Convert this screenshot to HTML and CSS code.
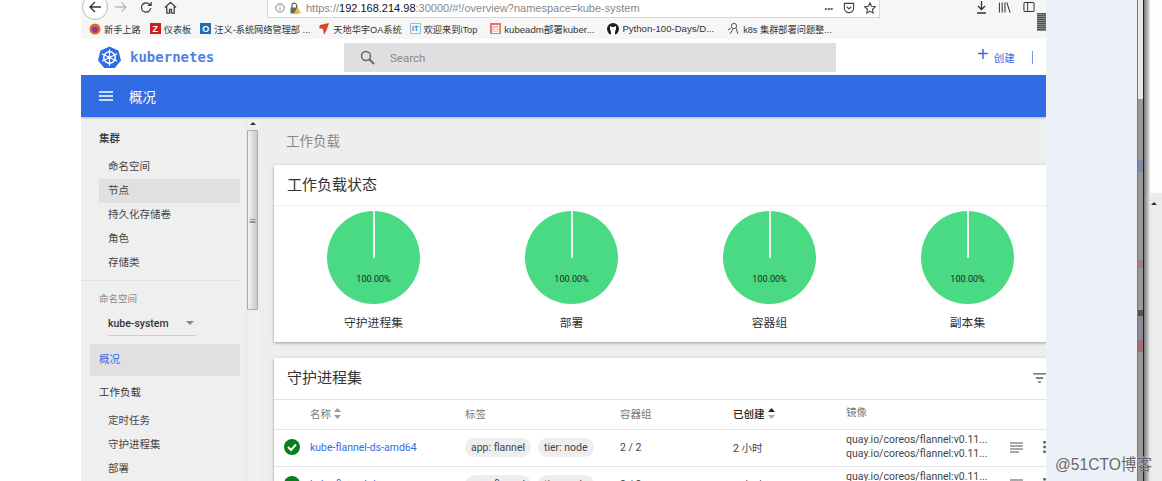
FILE: index.html
```html
<!DOCTYPE html>
<html lang="zh">
<head>
<meta charset="utf-8">
<title>Kubernetes</title>
<link rel="stylesheet" href="styles.css">
</head>
<body>
<div class="screen">
  <div class="gutter"></div>
  <div class="window">
    <div class="toolbar">
      <div class="nav">
        <span class="back"><svg width="16" height="16" viewBox="0 0 16 16"><path d="M14 8H3M8 3 3 8l5 5" fill="none" stroke="#333" stroke-width="1.400"/></svg></span>
        <svg class="fwd" width="14" height="14" viewBox="0 0 14 14"><path d="M1 7h11M7.500 2.500 12 7l-4.500 4.500" fill="none" stroke="#bbb" stroke-width="1.300"/></svg>
        <svg class="reload" width="13" height="13" viewBox="0 0 14 14"><path d="M11.500 7.500A5 5 0 1 1 9.500 3L12 4.500M12 1v3.800H8.500" fill="none" stroke="#444" stroke-width="1.400"/></svg>
        <svg class="home" width="13" height="13" viewBox="0 0 14 14"><path d="M1 7 7 1.500 13 7M3 6v7h3V9h2v4h3V6" fill="none" stroke="#444" stroke-width="1.400"/></svg>
      </div>
      <div class="urlbar">
        <svg class="ubar-ico" width="10" height="10" viewBox="0 0 12 12"><circle cx="6" cy="6" r="5" fill="none" stroke="#666"/><path d="M6 5.500v3M6 3v1.200" stroke="#666"/></svg>
        <svg class="lock ubar-ico" width="12" height="12" viewBox="0 0 12 12"><path d="M3 6V3.500a2.300 2.300 0 0 1 4.600 0V6" fill="none" stroke="#666" stroke-width="1.200"/><rect x="1.500" y="5.500" width="7.500" height="6" fill="#666"/><path d="M8.500 5 12 11.500H5z" fill="#f2b632"/></svg>
        <span class="url"><span class="dim">https://</span>192.168.214.98<span class="dim">:30000/#!/overview?namespace=kube-system</span></span>
        <span class="spacer"></span>
        <span class="dots">•••</span>
        <svg class="ubar-ico" width="12" height="12" viewBox="0 0 13 13"><path d="M1.500 1.500h10v5a5 5 0 0 1-10 0z" fill="none" stroke="#444" stroke-width="1.200"/><path d="M4 5l2.500 2.500L9 5" fill="none" stroke="#444" stroke-width="1.200"/></svg>
        <svg class="star ubar-ico" width="12" height="12" viewBox="0 0 13 13"><path d="m6.500 1 1.700 3.700 4 .5-3 2.700.8 4-3.500-2-3.500 2 .8-4-3-2.700 4-.5z" fill="none" stroke="#444" stroke-width="1.200"/></svg>
      </div>
      <div class="tools">
        <svg width="11" height="13" viewBox="0 0 11 13"><path d="M5.500 0v8M2 5l3.500 3.500L9 5M1 12h9" fill="none" stroke="#333" stroke-width="1.300"/></svg>
        <svg class="lib" width="13" height="13" viewBox="0 0 14 13"><path d="M1.500 1v11M4.500 1v11M7.500 1v11M9.500 1l3.500 11" fill="none" stroke="#333" stroke-width="1.100"/></svg>
        <svg class="panel" width="12" height="12" viewBox="0 0 13 13"><rect x="1" y="1.500" width="11" height="10" rx="1.500" fill="none" stroke="#333" stroke-width="1.100"/><path d="M5 1.500v10" stroke="#333"/></svg>
        <span class="grip"></span>
      </div>
    </div>
    <div class="bookmarks">
      <span class="bm"><svg width="12" height="12" viewBox="0 0 12 12"><circle cx="6" cy="6" r="5.500" fill="#e8632a"/><circle cx="6" cy="6.500" r="3" fill="#7a3fa0"/></svg>新手上路</span>
      <span class="bm"><i class="z">Z</i>仪表板</span>
      <span class="bm tight"><i class="o">O</i>汪义-系统网络管理部 ...</span>
      <span class="bm tight"><svg width="12" height="12" viewBox="0 0 12 12"><path d="M2 2 11 0 9 6 6 12 5 6 1 5z" fill="#d9472b"/></svg>天地华宇OA系统</span>
      <span class="bm roomy"><i class="it">iT</i>欢迎来到iTop</span>
      <span class="bm roomy wide"><i class="k">図</i>kubeadm部署kuber...</span>
      <span class="bm roomy wide"><svg width="12" height="12" viewBox="0 0 12 12"><circle cx="6" cy="6" r="6" fill="#1b1f23"/><path d="M4 12V9L3 6V3l2 1h2l2-1v3L8 9v3z" fill="#fff"/></svg>Python-100-Days/D...</span>
      <span class="bm"><svg width="13" height="13" viewBox="0 0 13 13"><circle cx="7" cy="4" r="2.600" fill="none" stroke="#555"/><path d="M1 8l3-2M9 6l2 6M3 12l3-5" fill="none" stroke="#555"/></svg>k8s 集群部署问题整...</span>
    </div>
    <header class="k-head">
      <div class="brand">
        <svg width="23" height="23" viewBox="0 0 24 24"><path d="M12 .5 21.500 5 24 15l-6.500 8h-11L0 15 2.500 5z" fill="#326ce5"/><circle cx="12" cy="12" r="6" fill="none" stroke="#fff" stroke-width="1.600"/><path d="M12 3.500v17M4 8l16 8M20 8 4 16" stroke="#fff" stroke-width="1.200"/><circle cx="12" cy="12" r="1.800" fill="#fff"/></svg>
        <span class="logo-text">kubernetes</span>
      </div>
      <div class="search">
        <svg width="15" height="15" viewBox="0 0 15 15"><circle cx="6" cy="6" r="4.500" fill="none" stroke="#666" stroke-width="1.500"/><path d="m9.500 9.500 4.500 4.500" stroke="#666" stroke-width="1.800"/></svg>
        <span>Search</span>
      </div>
      <div class="create"><span class="plus">+</span><span class="create-label">创建</span><span class="sep"></span></div>
    </header>
    <div class="k-bar">
      <svg width="14" height="10" viewBox="0 0 14 10"><path d="M0 1h14M0 5h14M0 9h14" stroke="#fff" stroke-width="1.500"/></svg>
      <span>概况</span>
    </div>
    <div class="k-main">
      <nav class="side">
        <div class="side-h first">集群</div>
        <div class="side-i">命名空间</div>
        <div class="side-i on">节点</div>
        <div class="side-i">持久化存储卷</div>
        <div class="side-i">角色</div>
        <div class="side-i">存储类</div>
        <div class="rule"></div>
        <div class="ns-label">命名空间</div>
        <div class="ns-select"><span>kube-system</span><i class="caret"></i></div>
        <div class="side-active">概况</div>
        <div class="side-h">工作负载</div>
        <div class="side-i sub-first">定时任务</div>
        <div class="side-i">守护进程集</div>
        <div class="side-i">部署</div>
      </nav>
      <div class="vscroll"><i class="arrow"></i><div class="thumb"><span>≡</span></div></div>
      <main class="content">
        <h1 class="page-title">工作负载</h1>
        <section class="card status">
          <h2 class="card-title">工作负载状态</h2>
          <div class="pies">
            <div class="pie-cell"><div class="pie"><span class="needle"></span><span class="pct">100.00%</span></div><div class="pie-name">守护进程集</div></div>
            <div class="pie-cell"><div class="pie"><span class="needle"></span><span class="pct">100.00%</span></div><div class="pie-name">部署</div></div>
            <div class="pie-cell"><div class="pie"><span class="needle"></span><span class="pct">100.00%</span></div><div class="pie-name">容器组</div></div>
            <div class="pie-cell"><div class="pie"><span class="needle"></span><span class="pct">100.00%</span></div><div class="pie-name">副本集</div></div>
          </div>
        </section>
        <section class="card table-card">
          <div class="table-head">
            <h2 class="card-title">守护进程集</h2>
            <svg width="13" height="10" viewBox="0 0 14 11"><path d="M0 1h14M3 5.500h8M5.500 10h3" stroke="#555" stroke-width="1.400"/></svg>
          </div>
          <div class="row heads">
            <span class="c-ico"></span>
            <span class="c-name">名称 <svg width="7" height="11" viewBox="0 0 7 11"><path d="M3.500 0 7 4H0zM3.500 11 0 7h7z" fill="#999"/></svg></span>
            <span class="c-tags">标签</span>
            <span class="c-pods">容器组</span>
            <span class="c-age strong">已创建 <svg width="7" height="11" viewBox="0 0 7 11"><path d="M3.500 0 7 4H0z" fill="#222"/><path d="M3.500 11 0 7h7z" fill="#aaa"/></svg></span>
            <span class="c-img">镜像</span>
          </div>
          <div class="row body">
            <span class="c-ico"><svg width="16" height="16" viewBox="0 0 16 16"><circle cx="8" cy="8" r="8" fill="#0a7d1e"/><path d="m4 8 3 3 5-5.500" fill="none" stroke="#fff" stroke-width="2"/></svg></span>
            <span class="c-name link">kube-flannel-ds-amd64</span>
            <span class="c-tags"><em class="chip">app: flannel</em><em class="chip">tier: node</em></span>
            <span class="c-pods">2 / 2</span>
            <span class="c-age">2 小时</span>
            <span class="c-img">quay.io/coreos/flannel:v0.11...<br>quay.io/coreos/flannel:v0.11...</span>
            <span class="c-act"><svg width="13" height="11" viewBox="0 0 13 11"><path d="M0 1h13M0 4h13M0 7h13M0 10h9" stroke="#555" stroke-width="1.200"/></svg><svg class="kebab" width="3" height="12" viewBox="0 0 3 12"><path d="M1.500 0v2.500M1.500 4.700v2.500M1.500 9.400v2.500" stroke="#555" stroke-width="2.400"/></svg></span>
          </div>
          <div class="row body">
            <span class="c-ico"><svg width="16" height="16" viewBox="0 0 16 16"><circle cx="8" cy="8" r="8" fill="#0a7d1e"/><path d="m4 8 3 3 5-5.500" fill="none" stroke="#fff" stroke-width="2"/></svg></span>
            <span class="c-name link">kube-flannel-ds</span>
            <span class="c-tags"><em class="chip">app: flannel</em><em class="chip">tier: node</em></span>
            <span class="c-pods">2 / 2</span>
            <span class="c-age">2 小时</span>
            <span class="c-img">quay.io/coreos/flannel:v0.11...<br>quay.io/coreos/flannel:v0.11...</span>
            <span class="c-act"><svg width="13" height="11" viewBox="0 0 13 11"><path d="M0 1h13M0 4h13M0 7h13M0 10h9" stroke="#555" stroke-width="1.200"/></svg><svg class="kebab" width="3" height="12" viewBox="0 0 3 12"><path d="M1.500 0v2.500M1.500 4.700v2.500M1.500 9.400v2.500" stroke="#555" stroke-width="2.400"/></svg></span>
          </div>
        </section>
      </main>
    </div>
  </div>
  <div class="pane"></div>
  <div class="edge"><div class="edge-track"></div><div class="edge-line"></div><div class="edge-shadow"></div></div>
  <div class="far">
    <div class="far-top"></div>
    <div class="far-strip"><i class="arrow"></i></div>
  </div>
  <div class="watermark">@51CTO博客</div>
</div>
</body>
</html>
```
FILE: styles.css
```css
* { box-sizing: border-box; }
html, body { margin: 0; height: 100%; overflow: hidden; }
body { font-family: "Liberation Sans", "Noto Sans CJK SC", sans-serif; background: #fff; color: #333; }
.screen { position: relative; display: flex; width: 1162px; height: 481px; overflow: hidden; }
.gutter { width: 81px; flex: none; background: #fff; }
.window { width: 965px; flex: none; display: flex; flex-direction: column; overflow: hidden; background: #eee; }

.toolbar { height: 18px; flex: none; display: flex; background: #f6f6f6; position: relative; }
.nav { width: 186px; display: flex; align-items: center; padding-left: 1px; margin-top: -4px; }
.back { width: 26px; height: 26px; margin-top: -1px; border: 1px solid #bbb; border-radius: 50%; background: #fff; display: flex; align-items: center; justify-content: center; flex: none; }
.fwd { margin-left: 6px; }
.reload { margin-left: 12px; }
.home { margin-left: 11px; }
.urlbar { width: 613px; height: 18px; background: #fff; border: 1px solid #d8d8d8; border-top: 0; display: flex; align-items: center; gap: 4px; padding: 0 3px 1px 7px; font-size: 11px; }
.lock { margin-right: 1px; }
.url { color: #111; white-space: nowrap; font-size: 11px; }
.dim { color: #888; }
.spacer { flex: 1; }
.dots { font-size: 8px; color: #555; letter-spacing: 0; margin-right: 6px; }
.star { margin-left: 5px; }
.tools { flex: 1; display: flex; align-items: center; padding-left: 96px; padding-bottom: 4px; position: relative; }
.lib { margin-left: 11px; }
.panel { margin-left: 12px; }
.grip { position: absolute; right: 0; top: 13px; width: 9px; height: 18px; background: repeating-linear-gradient(#555 0 1px, #888 1px 2px); z-index: 2; }

.bookmarks { height: 21px; flex: none; display: flex; align-items: center; background: #f6f6f6; font-size: 9.200px; color: #333; padding-left: 8px; white-space: nowrap; }
.bm { display: inline-flex; align-items: center; gap: 3px; margin-right: 9px; }
.bm.tight { margin-right: 8px; }
.bm.roomy { margin-right: 13px; }
.bm.wide { font-size: 9.600px; }
.bm i { font-style: normal; width: 11px; height: 11px; display: inline-flex; align-items: center; justify-content: center; font-size: 9px; font-weight: 700; }
.bm .z { background: #c8201f; color: #fff; }
.bm .o { background: #1e6db7; color: #fff; }
.bm .it { color: #3a8fc8; border: 1px solid #8ec0e0; font-size: 8px; }
.bm .k { background: #e2756a; color: #fff; font-size: 8px; }

.k-head { height: 36px; flex: none; background: #fff; display: flex; align-items: flex-start; }
.brand { width: 263px; height: 36px; display: flex; align-items: center; gap: 9px; padding-left: 17px; }
.logo-text { color: #326ce5; font-family: "DejaVu Sans Mono", monospace; font-size: 14px; font-weight: 700; opacity: .85; }
.search { width: 492px; height: 29px; margin-top: 4px; background: #dfdfdf; display: flex; align-items: center; gap: 15px; padding-left: 16px; color: #888; font-family: Roboto, sans-serif; font-size: 11.500px; }
.create { flex: 1; height: 36px; display: flex; align-items: center; padding-left: 141px; color: #326ce5; }
.plus { font-size: 20px; font-weight: 300; line-height: 20px; margin-top: -6px; }
.create-label { font-size: 10.500px; margin-left: 5px; }
.sep { width: 1px; height: 13px; background: #6f9ae8; margin-left: 17px; }

.k-bar { height: 42px; flex: none; background: #326ce5; display: flex; align-items: center; gap: 16px; padding-left: 18px; color: #fff; font-size: 13.500px; box-shadow: 0 1px 2px rgba(0,0,0,.25); z-index: 1; }

.k-main { flex: 1; min-height: 0; display: flex; font-family: Roboto, "Noto Sans CJK SC", sans-serif; }
.side { width: 166px; flex: none; background: #efefef; border-right: 1px solid #e6e6e6; font-size: 10.500px; color: #444; padding-top: 10px; overflow: hidden; }
.side-h { height: 24px; line-height: 24px; padding-left: 18px; color: #333; font-weight: 400; }
.side-h.first { font-weight: 500; height: 24px; margin-bottom: 4px; }
.side-i { height: 24px; line-height: 24px; margin-left: 18px; margin-right: 6px; padding-left: 9px; }
.side-i.on { background: #e0e0e0; }
.rule { height: 1px; background: #e2e2e2; margin: 5px 6px 10px 0; }
.ns-label { font-size: 9.500px; color: #888; padding-left: 18px; height: 15px; line-height: 15px; }
.ns-select { margin: 5px 0 0 27px; width: 88px; height: 25px; border-bottom: 1px solid #ccc; display: flex; align-items: center; justify-content: space-between; padding-right: 2px; font-size: 10.500px; font-weight: 500; color: #333; }
.caret { width: 0; height: 0; border: 4px solid transparent; border-top-color: #888; border-bottom: 0; }
.side-active { height: 32px; line-height: 32px; margin: 8px 6px 5px 9px; padding-left: 9px; background: #e0e0e0; color: #326ce5; }
.sub-first { margin-top: 4px; }

.vscroll { width: 12px; flex: none; background: #f0f0f0; position: relative; padding-top: 13px; }
.vscroll > .arrow { position: absolute; top: 5px; left: 3px; }
.arrow { display: block; width: 0; height: 0; border: 3px solid transparent; border-bottom-color: #333; border-top: 0; }
.thumb { height: 180px; width: 11px; border: 1px solid #aaa; border-radius: 1px; background: linear-gradient(90deg, #f4f4f4, #c8c8c8); display: flex; align-items: center; justify-content: center; font-size: 8px; color: #555; }

.content { flex: 1; min-width: 0; padding: 0 0 0 15px; background: #eee; overflow: hidden; }
.page-title { margin: 0; height: 48px; padding: 14px 0 0 12px; font-size: 13.500px; font-weight: 400; color: #888; line-height: 20px; }
.card { background: #fff; box-shadow: 0 1px 3px rgba(0,0,0,.35); width: 790px; }
.card-title { margin: 0; font-size: 15px; font-weight: 400; color: #333; }
.status { height: 177px; }
.status > .card-title { height: 41px; line-height: 41px; padding-left: 13px; border-bottom: 1px solid #eee; }
.pies { display: flex; padding-left: 53px; gap: 105px; padding-top: 5px; }
.pie-cell { width: 93px; flex: none; text-align: center; }
.pie { position: relative; width: 93px; height: 93px; border-radius: 50%; background: #4ada84; }
.needle { position: absolute; left: 46px; top: 0; width: 1.500px; height: 47px; background: #eef5ef; }
.pct { position: absolute; left: 0; right: 0; top: 62px; font-size: 9px; color: #222; line-height: 12px; }
.pie-name { margin-top: 11px; font-size: 11.800px; color: #333; line-height: 16px; white-space: nowrap; }

.table-card { margin-top: 16px; }
.table-head { height: 42px; width: 772px; display: flex; align-items: center; justify-content: space-between; padding: 0 0 5px 13px; border-bottom: 1px solid #e4e4e4; }
.table-head svg { flex: none; margin-top: 3px; }
.row { display: flex; align-items: center; border-bottom: 1px solid #e6e6e6; font-size: 10.500px; color: #444; width: 772px; }
.heads { height: 30px; color: #777; padding-bottom: 2px; }
.body { height: 37px; padding-bottom: 2px; }
.c-ico { width: 36px; flex: none; padding-left: 10px; display: flex; }
.c-name { width: 155px; flex: none; white-space: nowrap; display: flex; align-items: center; gap: 3px; }
.c-tags { width: 155px; flex: none; display: flex; gap: 7px; }
.c-pods { width: 113px; flex: none; }
.c-age { width: 113px; flex: none; display: flex; align-items: center; gap: 3px; }
.c-img { width: 164px; flex: none; line-height: 14.500px; white-space: nowrap; }
.c-act { display: flex; align-items: center; gap: 20px; flex: none; }
.link { color: #326ce5; }
.strong { color: #222; font-weight: 500; }
.chip { font-style: normal; background: #eee; border-radius: 10px; padding: 3px 6px; line-height: 13px; white-space: nowrap; color: #444; }

.pane { width: 91px; flex: none; background: #ecf1f8; }
.edge { flex: none; display: flex; }
.edge-track { width: 6px; flex: none; border-left: 1px solid #777; background: linear-gradient(#e8e8e8 0 99px, #9a9a9a 99px 160px, #8288a8 160px 172px, #9a9a9a 172px 260px, #a08088 260px 268px, #9a9a9a 268px 310px, #555 310px 316px, #8a8a9a 316px 340px, #a07078 340px 352px, #9a9a9a 352px); }
.edge-line { width: 1px; flex: none; background: #222; }
.edge-shadow { width: 6px; flex: none; background: linear-gradient(90deg, #777, #e8e8e8); }
.far { flex: 1; min-width: 0; background: #fff; display: flex; flex-direction: column; }
.far-top { height: 193px; background: #fdfdfd; }
.far-strip { flex: 1; background: #ececec; padding: 9px 0 0 1px; }
.watermark { position: absolute; left: 1055px; top: 452px; font-size: 15.600px; color: #666; text-shadow: 0 0 1px #fff; white-space: nowrap; }
```
